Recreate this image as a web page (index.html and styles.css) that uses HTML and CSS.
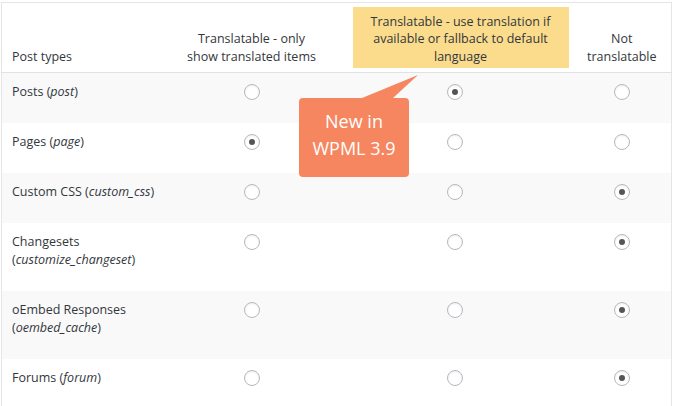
FILE: index.html
```html
<!DOCTYPE html>
<html lang="en">
<head>
  <meta charset="UTF-8" />
  <title>WPML Post Types Translation</title>
  <link rel="stylesheet" href="styles.css">
</head>
<body>
  <div class="settings-wrap">
    <table class="post-types">
      <colgroup>
        <col class="col-name">
        <col class="col-only">
        <col class="col-fallback">
        <col class="col-not">
      </colgroup>
      <thead>
        <tr>
          <th class="name">Post types</th>
          <th>Translatable - only<br>show translated items</th>
          <th class="highlight-cell"><span class="highlight">Translatable - use translation if available or fallback to default language</span></th>
          <th>Not<br>translatable</th>
        </tr>
      </thead>
      <tbody>
        <tr class="alt">
          <td class="name">Posts (<em>post</em>)</td>
          <td><input type="radio" name="post"></td>
          <td><input type="radio" name="post" checked></td>
          <td><input type="radio" name="post"></td>
        </tr>
        <tr>
          <td class="name">Pages (<em>page</em>)</td>
          <td><input type="radio" name="page" checked></td>
          <td><input type="radio" name="page"></td>
          <td><input type="radio" name="page"></td>
        </tr>
        <tr class="alt">
          <td class="name">Custom CSS (<em>custom_css</em>)</td>
          <td><input type="radio" name="css"></td>
          <td><input type="radio" name="css"></td>
          <td><input type="radio" name="css" checked></td>
        </tr>
        <tr>
          <td class="name">Changesets<br>(<em>customize_changeset</em>)</td>
          <td><input type="radio" name="changeset"></td>
          <td><input type="radio" name="changeset"></td>
          <td><input type="radio" name="changeset" checked></td>
        </tr>
        <tr class="alt">
          <td class="name">oEmbed Responses<br>(<em>oembed_cache</em>)</td>
          <td><input type="radio" name="oembed"></td>
          <td><input type="radio" name="oembed"></td>
          <td><input type="radio" name="oembed" checked></td>
        </tr>
        <tr>
          <td class="name">Forums (<em>forum</em>)</td>
          <td><input type="radio" name="forum"></td>
          <td><input type="radio" name="forum"></td>
          <td><input type="radio" name="forum" checked></td>
        </tr>
      </tbody>
    </table>

    <div class="callout">
      <svg class="callout-tail" width="60" height="26" viewBox="0 0 60 26">
        <polygon points="3,24 59,1 34,24" fill="#f5865f"/>
      </svg>
      New in<br>WPML 3.9
    </div>
  </div>
</body>
</html>
```

FILE: styles.css
```css
* { box-sizing: border-box; }

body {
  margin: 0;
  font-family: 'Open Sans', sans-serif;
  font-size: 12.5px;
  color: #32373c;
  background: #fff;
}

.settings-wrap {
  position: relative;
  padding: 2px 0 0 1px;
}

.post-types {
  width: 670px;
  border-collapse: collapse;
  table-layout: fixed;
  border: 1px solid #e5e5e5;
  border-bottom: none;
}

.col-name { width: 165px; }
.col-only { width: 170px; }
.col-fallback { width: 236px; }
.col-not { width: 99px; }

th {
  height: 70px;
  font-weight: 400;
  line-height: 18px;
  text-align: center;
  vertical-align: bottom;
  padding: 0 4px 6px;
  border-bottom: 1px solid #e1e1e1;
}

th.name {
  text-align: left;
  padding-left: 10px;
}

th.highlight-cell {
  padding: 0 4px 4px 16px;
}

.highlight {
  display: block;
  background: #fbdc8d;
  padding: 6px 8px 3px;
  line-height: 17.5px;
}

td {
  line-height: 18px;
  padding: 10px 10px 22px;
  text-align: center;
  vertical-align: top;
}

td.name {
  text-align: left;
  padding-right: 2px;
  white-space: nowrap;
}

tr.alt td { background: #f9f9f9; }

input[type="radio"] {
  appearance: none;
  -webkit-appearance: none;
  width: 16px;
  height: 16px;
  margin: 1px 0 0;
  border: 1px solid #b4b9be;
  border-radius: 50%;
  background: #fff;
  box-shadow: inset 0 1px 2px rgba(0,0,0,0.07);
  vertical-align: top;
  position: relative;
}

input[type="radio"]:checked::before {
  content: "";
  position: absolute;
  left: 4px;
  top: 4px;
  width: 6px;
  height: 6px;
  border-radius: 50%;
  background: #555;
}

.callout {
  position: absolute;
  left: 299px;
  top: 98px;
  width: 110px;
  height: 79px;
  padding-top: 10px;
  background: #f5865f;
  border-radius: 4px;
  color: #fff;
  font-size: 18px;
  line-height: 27px;
  text-align: center;
}

.callout-tail {
  position: absolute;
  left: 60px;
  top: -24px;
}
```
